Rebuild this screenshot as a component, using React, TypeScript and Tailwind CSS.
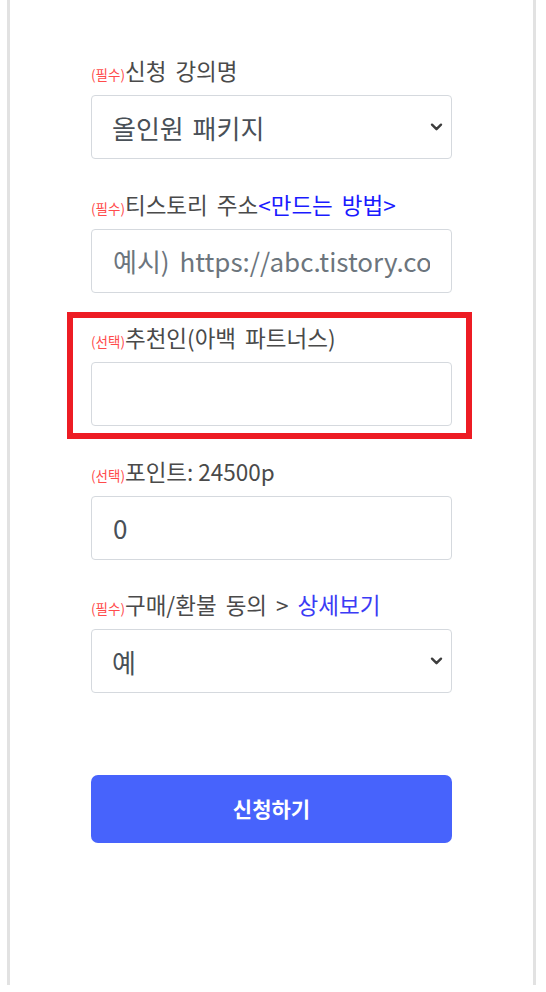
import React from "react";

const font = { fontFamily: '"Noto Sans CJK KR", "Noto Sans", sans-serif' };

function Tag({ children }: { children: React.ReactNode }) {
  return <span className="text-[13.5px] text-[#ff4b4b] align-baseline">{children}</span>;
}

function Chevron() {
  return (
    <svg
      className="pointer-events-none absolute right-[9px] top-1/2 -translate-y-1/2"
      width="13"
      height="9"
      viewBox="0 0 13 9"
      fill="none"
    >
      <path d="M2 2.2L6.5 6.7L11 2.2" stroke="#3d3d3d" strokeWidth="2.4" strokeLinecap="round" strokeLinejoin="round" />
    </svg>
  );
}

function SelectBox({ value }: { value: string }) {
  return (
    <div className="relative h-[64px] w-[361px]">
      <select
        defaultValue={value}
        className="h-full w-full appearance-none rounded-[4px] border border-[#d5d9de] bg-white pl-[20px] pr-[40px] text-[26px] text-[#495057] outline-none [word-spacing:3px]"
        style={font}
      >
        <option>{value}</option>
      </select>
      <Chevron />
    </div>
  );
}

function TextBox({ placeholder, value }: { placeholder?: string; value?: string }) {
  return (
    <input
      type="text"
      placeholder={placeholder}
      defaultValue={value}
      className="h-[64px] w-[361px] rounded-[4px] border border-[#d5d9de] bg-white px-[21px] text-[26px] text-[#495057] outline-none placeholder:text-[#6c757d] [word-spacing:4px]"
      style={font}
    />
  );
}

function Label({ children }: { children: React.ReactNode }) {
  return (
    <div className="h-[30px] text-[22.5px] leading-[30px] text-[#4a4a4a] whitespace-nowrap [word-spacing:4px]" style={font}>
      {children}
    </div>
  );
}

export default function App() {
  return (
    <div className="min-h-[992px] bg-white" style={font}>
      <div className="ml-[7px] h-[985px] w-[529px] border-x-[3px] border-[#e2e2e2] pl-[81px] pt-[55px]">
        <div className="flex w-[361px] flex-col gap-[29.5px]">
          <div className="flex flex-col gap-[10px]">
            <Label>
              <Tag>(필수)</Tag>신청 강의명
            </Label>
            <SelectBox value="올인원 패키지" />
          </div>

          <div className="flex flex-col gap-[10px]">
            <Label>
              <Tag>(필수)</Tag>티스토리 주소<span className="text-[#1a1aff]">&lt;만드는 방법&gt;</span>
            </Label>
            <TextBox placeholder="예시) https://abc.tistory.com" />
          </div>

          <div className="relative flex flex-col gap-[10px]">
            <Label>
              <Tag>(선택)</Tag>추천인(아백 파트너스)
            </Label>
            <TextBox />
            <div className="pointer-events-none absolute -bottom-[13px] -left-[24px] -right-[20px] -top-[10px] border-[6px] border-[#ed1c24]" />
          </div>

          <div className="flex flex-col gap-[10px]">
            <Label>
              <Tag>(선택)</Tag>포인트:<span className="[word-spacing:0px]"> 24500p</span>
            </Label>
            <TextBox value="0" />
          </div>

          <div className="flex flex-col gap-[10px]">
            <Label>
              <Tag>(필수)</Tag>구매/환불 동의 &gt; <span className="text-[#3b3bf5]">상세보기</span>
            </Label>
            <SelectBox value="예" />
          </div>
        </div>

        <button
          type="button"
          className="mt-[82px] flex h-[68px] w-[361px] items-center justify-center rounded-[7px] bg-[#4763fc] text-[21px] font-bold text-white"
          style={font}
        >
          신청하기
        </button>
      </div>
    </div>
  );
}
